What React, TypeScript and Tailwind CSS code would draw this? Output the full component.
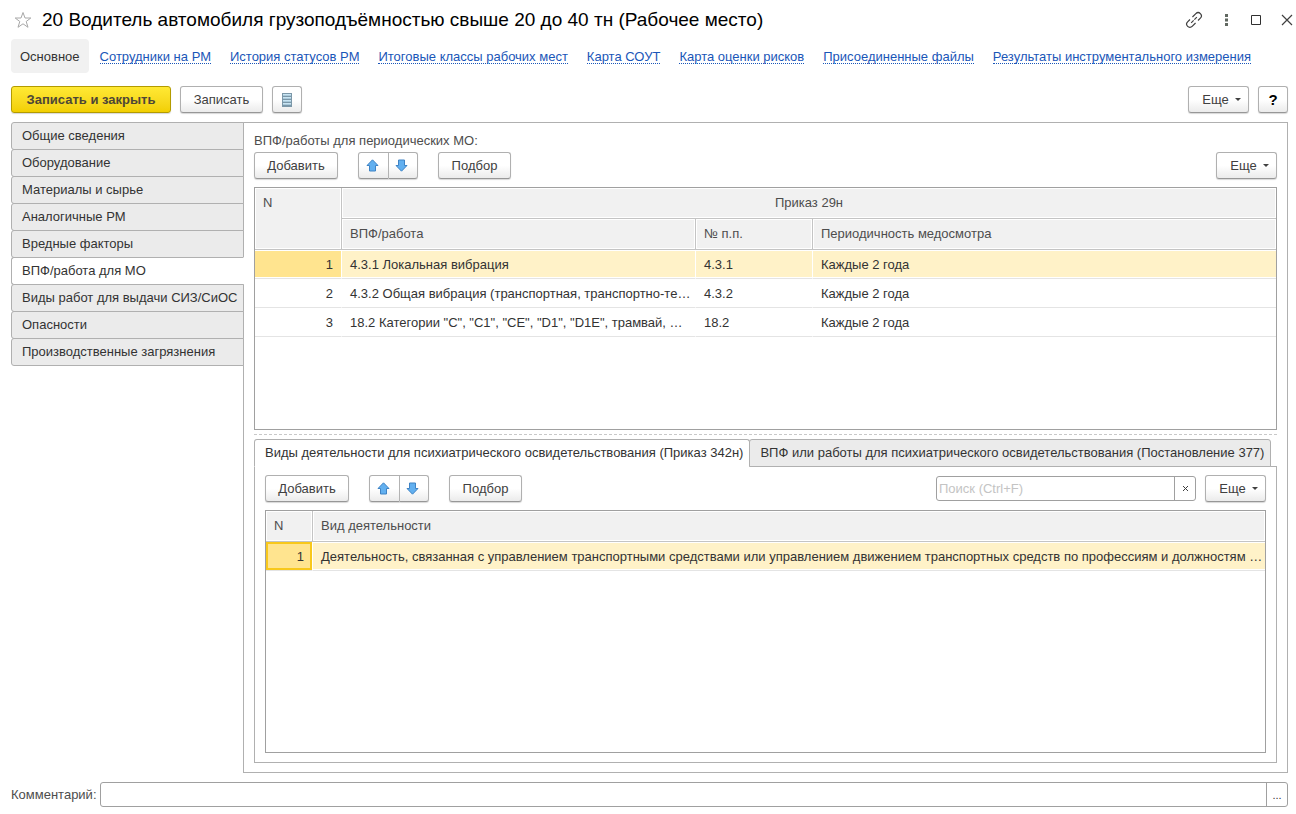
import { useState } from "react";
import type { ReactNode } from "react";
import clsx from "clsx";

const links = [
  "Сотрудники на РМ",
  "История статусов РМ",
  "Итоговые классы рабочих мест",
  "Карта СОУТ",
  "Карта оценки рисков",
  "Присоединенные файлы",
  "Результаты инструментального измерения",
];

const sections = [
  "Общие сведения",
  "Оборудование",
  "Материалы и сырье",
  "Аналогичные РМ",
  "Вредные факторы",
  "ВПФ/работа для МО",
  "Виды работ для выдачи СИЗ/СиОС",
  "Опасности",
  "Производственные загрязнения",
];

const works = [
  { id: 1, name: "4.3.1 Локальная вибрация", code: "4.3.1", period: "Каждые 2 года" },
  { id: 2, name: "4.3.2 Общая вибрация (транспортная, транспортно-те…", code: "4.3.2", period: "Каждые 2 года" },
  { id: 3, name: '18.2 Категории "C", "C1", "CE", "D1", "D1E", трамвай, …', code: "18.2", period: "Каждые 2 года" },
];

const activities = [
  {
    id: 1,
    name: "Деятельность, связанная с управлением транспортными средствами или управлением движением транспортных средств по профессиям и должностям …",
  },
];

const psychTabs = [
  "Виды деятельности для психиатрического освидетельствования (Приказ 342н)",
  "ВПФ или работы для психиатрического освидетельствования (Постановление 377)",
];

const buttonBase =
  "flex h-[27px] shrink-0 items-center justify-center border border-[#b0b0b0] border-b-[#979797] bg-linear-to-b from-white from-50% to-[#ebebeb] text-[#404040] shadow-[0_1px_1px_#d8d8d8]";
const headCell =
  "border-b border-[#c4c4c4] bg-[#f1f1f1] px-2 font-normal text-[#4d4d4d] shadow-[inset_0_0_0_1px_#fff]";
const bodyCell =
  "h-[29px] overflow-hidden border-b border-[#e4e4e4] px-2 pt-[2px] whitespace-nowrap shadow-[inset_0_1px_#fff,inset_0_-1px_#fff]";

function Button({ children, className, label }: { children: ReactNode; className?: string; label?: string }) {
  return (
    <button type="button" aria-label={label} className={clsx(buttonBase, "rounded-[3px]", className)}>
      {children}
    </button>
  );
}

function MoreButton() {
  return (
    <Button className="w-[61px] gap-[6px] pl-[6px]">
      Еще
      <svg width="6" height="3" viewBox="0 0 6 3" fill="#404040">
        <path d="M0 0h6L3 3z" />
      </svg>
    </Button>
  );
}

function Arrow({ down }: { down?: boolean }) {
  return (
    <svg width="13" height="13" viewBox="0 0 13 13" className={down ? "rotate-180" : ""}>
      <path
        d="M6.5 .8 12 6.5H9.5V12h-6V6.5H1z"
        fill="#62b0f0"
        stroke="#3f83c4"
        strokeLinejoin="round"
      />
    </svg>
  );
}

function ListCommands() {
  return (
    <>
      <Button className="w-[84px]">Добавить</Button>
      <div className="ml-5 flex">
        <button type="button" aria-label="Переместить вверх" className={clsx(buttonBase, "w-[31px] rounded-l-[3px] pr-[2px]")}>
          <Arrow />
        </button>
        <button
          type="button"
          aria-label="Переместить вниз"
          className={clsx(buttonBase, "w-[29px] rounded-r-[3px] border-l-0 pr-[3px]")}
        >
          <Arrow down />
        </button>
      </div>
      <Button className="ml-5 w-[73px]">Подбор</Button>
    </>
  );
}

function TitleBar() {
  return (
    <header className="flex h-[39px] items-center pr-[3px] pl-[14px]">
      <button type="button" aria-label="Добавить в избранное">
        <svg width="18" height="18" viewBox="0 0 18 18" fill="none" stroke="#a8a8a8">
          <path d="M9 1.5 11 7h5.8l-4.6 3.5 1.8 5.8L9 12.8l-5 3.5 1.8-5.8L1.2 7H7z" />
        </svg>
      </button>
      <h1 className="ml-[10px] flex-1 truncate text-[19px] leading-7 text-black">
        20 Водитель автомобиля грузоподъёмностью свыше 20 до 40 тн (Рабочее место)
      </h1>
      <div className="flex items-center text-[#404040]">
        <button type="button" aria-label="Получить ссылку" className="mr-[21px]">
          <svg width="18" height="18" viewBox="0 0 18 18" fill="none" stroke="currentColor" strokeWidth="1.2">
            <g transform="rotate(-45 9 9)">
              <path d="M10 5.8h4.8a3.2 3.2 0 0 1 0 6.4H11.500" />
              <path d="M8 12.2H3.2a3.2 3.2 0 0 1 0-6.4H6.500" />
              <path d="M5 9h8" strokeDasharray="3.500 1" />
            </g>
          </svg>
        </button>
        <button type="button" aria-label="Меню" className="mr-[22px]">
          <svg width="5" height="12" viewBox="0 0 5 12" fill="#606860">
            <path d="M1 0h3v3H1zM1 4.500h3v3H1zM1 9h3v3H1z" />
          </svg>
        </button>
        <button type="button" aria-label="Развернуть" className="mr-5">
          <svg width="10" height="10" viewBox="0 0 10 10" fill="none" stroke="#303030">
            <path d="M.5 .5h9v9h-9z" />
          </svg>
        </button>
        <button type="button" aria-label="Закрыть">
          <svg width="12" height="12" viewBox="0 0 12 12" fill="none" stroke="currentColor" strokeWidth="1.2">
            <path d="m1 1 10 10M11 1 1 11" />
          </svg>
        </button>
      </div>
    </header>
  );
}

function WorksTable() {
  return (
    <div className="h-[243px] shrink-0 overflow-hidden border border-[#a0a0a0]">
      <table className="w-full table-fixed border-separate border-spacing-0">
        <colgroup>
          <col className="w-[87px]" />
          <col className="w-[354px]" />
          <col className="w-[117px]" />
          <col />
        </colgroup>
        <thead>
          <tr>
            <th rowSpan={2} className={clsx(headCell, "border-r pt-[7px] text-left align-top")}>
              N
            </th>
            <th colSpan={3} className={clsx(headCell, "h-[31px] text-center")}>
              Приказ 29н
            </th>
          </tr>
          <tr>
            <th className={clsx(headCell, "h-[31px] border-r text-left")}>ВПФ/работа</th>
            <th className={clsx(headCell, "border-r text-left")}>№ п.п.</th>
            <th className={clsx(headCell, "text-left")}>Периодичность медосмотра</th>
          </tr>
        </thead>
        <tbody>
          {works.map((work, i) => (
            <tr key={work.id} className={i === 0 ? "bg-[#fff2c8]" : ""}>
              <td className={clsx(bodyCell, "border-r border-r-white text-right", i === 0 && "bg-[#ffe48f]")}>
                {work.id}
              </td>
              <td className={clsx(bodyCell, "border-r border-r-white")}>{work.name}</td>
              <td className={clsx(bodyCell, "border-r border-r-white")}>{work.code}</td>
              <td className={bodyCell}>{work.period}</td>
            </tr>
          ))}
        </tbody>
      </table>
    </div>
  );
}

function ActivitiesTable() {
  return (
    <div className="min-h-[100px] flex-1 overflow-hidden border border-[#a0a0a0]">
      <table className="w-full table-fixed border-separate border-spacing-0">
        <colgroup>
          <col className="w-[47px]" />
          <col />
        </colgroup>
        <thead>
          <tr>
            <th className={clsx(headCell, "h-[31px] border-r text-left")}>N</th>
            <th className={clsx(headCell, "text-left")}>Вид деятельности</th>
          </tr>
        </thead>
        <tbody>
          {activities.map((row) => (
            <tr key={row.id} className="bg-[#fff2c8]">
              <td className="border-r border-b border-r-white border-b-[#e4e4e4] bg-[#ffe48f] px-2 pt-[2px] text-right shadow-[inset_0_0_0_2px_#f8c81c]">
                {row.id}
              </td>
              <td className={bodyCell}>{row.name}</td>
            </tr>
          ))}
        </tbody>
      </table>
    </div>
  );
}

export default function App() {
  const [section, setSection] = useState(5);
  const [psychTab, setPsychTab] = useState(0);

  return (
    <div className="flex min-h-screen flex-col bg-white font-['Liberation_Sans',Arial,sans-serif] text-[13px] leading-4 text-[#333]">
      <TitleBar />

      <nav className="flex h-[34px] items-center gap-[19px] pl-[11px] whitespace-nowrap">
        <span className="-mr-2 flex h-full items-center rounded-[4px] bg-[#f1f1f1] px-[9px] pt-px">Основное</span>
        {links.map((link) => (
          <a key={link} href="#" className="border-b border-dotted border-[#1a56b8] pt-[3px] leading-3 text-[#1a56b8]">
            {link}
          </a>
        ))}
      </nav>

      <div className="mt-[13px] flex gap-[9px] pr-2 pl-[11px]">
        <button
          type="button"
          className="h-[27px] w-40 rounded-[3px] border border-[#b39b00] bg-linear-to-b from-[#ffe933] to-[#f2cf00] font-bold text-[#4d4637] shadow-[0_1px_1px_#d8d8d8]"
        >
          Записать и закрыть
        </button>
        <Button className="w-[83px]">Записать</Button>
        <Button className="w-[30px]" label="Список">
          <svg width="10" height="14" viewBox="0 0 10 14">
            <path d="M0 0h10v14H0z" fill="#7b97a8" />
            <path d="M1 1.500h8M1 4.500h8M1 7.500h8M1 10.500h8" stroke="#c9e4f2" />
            <path d="M1 2.500h8M1 5.500h8M1 8.500h8M1 11.500h8" stroke="#a9c9da" />
          </svg>
        </Button>
        <div className="flex-1" />
        <MoreButton />
        <Button className="w-[30px] text-[15px] font-bold text-black">?</Button>
      </div>

      <main className="mt-[9px] flex flex-1 pr-2 pl-[11px]">
        <div role="tablist" aria-orientation="vertical" className="z-10 -mr-px flex w-[233px] shrink-0 flex-col">
          {sections.map((name, i) => (
            <button
              key={name}
              type="button"
              role="tab"
              aria-selected={i === section}
              onClick={() => setSection(i)}
              className={clsx(
                "-mb-px h-7 rounded-l-[3px] border border-[#b0b0b0] pl-[10px] text-left whitespace-nowrap",
                i === section ? "border-r-white bg-white" : "bg-[#ebebeb]",
              )}
            >
              {name}
            </button>
          ))}
        </div>

        <div className="flex min-w-0 flex-1 flex-col border border-[#b0b0b0] px-[10px] pt-[10px] pb-[9px]">
          <div className="h-[19px] text-[#4d4d4d]">ВПФ/работы для периодических МО:</div>
          <div className="mb-2 flex">
            <ListCommands />
            <div className="flex-1" />
            <MoreButton />
          </div>
          <WorksTable />

          <div className="my-1 border-t border-dashed border-[#c8c8c8]" />

          <div role="tablist" className="z-10 -mb-px flex">
            {psychTabs.map((name, i) => (
              <button
                key={name}
                type="button"
                role="tab"
                aria-selected={i === psychTab}
                onClick={() => setPsychTab(i)}
                className={clsx(
                  "-mr-px h-7 rounded-t-[3px] border border-[#b0b0b0] pr-[6px] pl-[10px] whitespace-nowrap",
                  i === psychTab ? "border-b-white bg-white" : "bg-[#ebebeb]",
                )}
              >
                {name}
              </button>
            ))}
          </div>
          <div className="flex flex-1 flex-col border border-[#b0b0b0] px-[10px] pt-2 pb-[9px]">
            <div className="mb-2 flex items-center">
              <ListCommands />
              <div className="flex-1" />
              <div className="mr-[9px] flex h-[25px] w-[260px] rounded-[3px] border border-[#a0a0a0]">
                <input
                  type="text"
                  aria-label="Поиск"
                  placeholder="Поиск (Ctrl+F)"
                  className="min-w-0 flex-1 px-[2px] outline-none placeholder:text-[#c4c4c4]"
                />
                <button type="button" aria-label="Очистить" className="flex w-[21px] items-center justify-center border-l border-[#a0a0a0]">
                  <svg width="5" height="5" viewBox="0 0 5 5" stroke="#404040">
                    <path d="m0 0 5 5M5 0 0 5" />
                  </svg>
                </button>
              </div>
              <MoreButton />
            </div>
            <ActivitiesTable />
          </div>
        </div>
      </main>

      <footer className="mt-[9px] mb-[7px] flex items-center pr-2 pl-[11px]">
        <label htmlFor="comment" className="mr-[3px] text-[#4d4d4d]">
          Комментарий:
        </label>
        <div className="flex h-[25px] flex-1 rounded-[3px] border border-[#a0a0a0]">
          <input id="comment" type="text" className="min-w-0 flex-1 px-1 outline-none" />
          <button type="button" aria-label="Выбрать" className="w-[21px] border-l border-[#a0a0a0] text-[11px]">
            ...
          </button>
        </div>
      </footer>
    </div>
  );
}
